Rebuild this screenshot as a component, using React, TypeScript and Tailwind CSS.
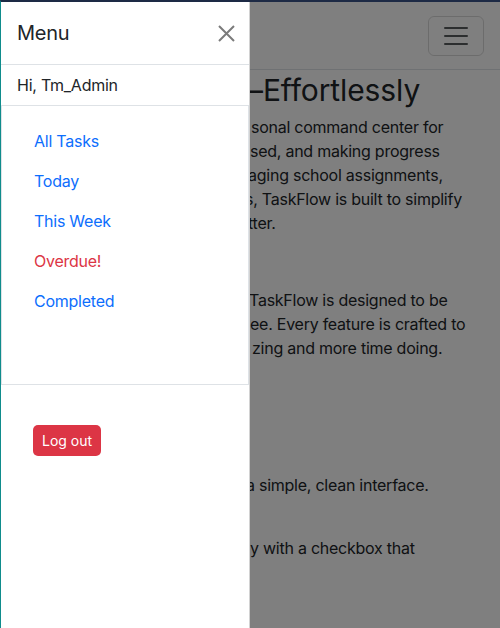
const links = [
  { label: "All Tasks", danger: false },
  { label: "Today", danger: false },
  { label: "This Week", danger: false },
  { label: "Overdue!", danger: true },
  { label: "Completed", danger: false },
];

function Navbar() {
  return (
    <nav className="flex h-[68px] items-center justify-end border-b border-[#dee2e6] bg-white pr-4">
      <button className="flex h-10 w-14 items-center justify-center rounded-md border border-[rgba(0,0,0,0.15)]">
        <svg width="30" height="30" viewBox="0 0 30 30">
          <path
            d="M4 7h22M4 15h22M4 23h22"
            stroke="rgba(33,37,41,0.75)"
            strokeWidth="2"
            strokeLinecap="round"
          />
        </svg>
      </button>
    </nav>
  );
}

function PageContent() {
  // only the right-hand part of the page shows past the open menu
  return (
    <main className="pl-[250px] text-[16px] leading-6 tracking-[-0.25px] text-[#212529]">
      <h1 className="-ml-[18px] mt-[3px] mb-2 whitespace-nowrap text-[30px] font-normal leading-[34px] tracking-[-0.1px]">
        —Effortlessly
      </h1>
      <p className="mb-[53px]">
        <span className="block whitespace-nowrap">sonal command center for</span>
        <span className="-ml-[1px] block whitespace-nowrap">sed, and making progress</span>
        <span className="-ml-[3px] block whitespace-nowrap">aging school assignments,</span>
        <span className="-ml-[6px] block whitespace-nowrap">s, TaskFlow is built to simplify</span>
        <span className="-ml-[3px] block whitespace-nowrap">tter.</span>
      </p>
      <p className="mb-[113px]">
        <span className="-ml-[2px] block whitespace-nowrap">TaskFlow is designed to be</span>
        <span className="-ml-[1px] block whitespace-nowrap">ee. Every feature is crafted to</span>
        <span className="ml-[1px] block whitespace-nowrap">zing and more time doing.</span>
      </p>
      <ul>
        <li className="-ml-[5px] mb-[39px] whitespace-nowrap">a simple, clean interface.</li>
        <li className="-ml-[1px] whitespace-nowrap">y with a checkbox that</li>
      </ul>
    </main>
  );
}

function SideMenu() {
  return (
    <aside className="absolute left-0 top-0 bottom-0 flex w-[249px] flex-col border-r border-[rgba(0,0,0,0.175)] bg-white tracking-[-0.25px] text-[#212529]">
      <div className="flex h-[63px] shrink-0 items-center justify-between border-b border-[#dee2e6] pl-4 pr-[14px]">
        <h5 className="text-[20px] font-normal leading-6">Menu</h5>
        <button aria-label="Close">
          <svg width="17" height="17" viewBox="0 0 17 17">
            <path d="M1 1l15 15M16 1L1 16" stroke="#7b7b7b" strokeWidth="2" />
          </svg>
        </button>
      </div>
      <div className="flex h-[41px] shrink-0 items-center border-b border-[#dee2e6] px-4">
        Hi, Tm_Admin
      </div>
      <div className="h-[279px] shrink-0 border-x border-b border-[#dee2e6] px-4 pt-[15px]">
        <ul className="flex flex-col">
          {links.map((l) => (
            <li key={l.label}>
              <a
                href="#"
                className={`block px-4 py-2 leading-6 ${l.danger ? "text-[#dc3545]" : "text-[#0d6efd]"}`}
              >
                {l.label}
              </a>
            </li>
          ))}
        </ul>
      </div>
      <div className="px-8 pt-10">
        <button className="rounded-[5px] bg-[#dc3545] px-[9px] py-[5px] text-[14px] leading-[21px] tracking-normal text-white">
          Log out
        </button>
      </div>
    </aside>
  );
}

export default function App() {
  return (
    <div
      className="h-[628px] overflow-hidden border-t-2 border-l border-t-[#1d2a45] border-l-[#0f8c8c] bg-white"
      style={{ fontFamily: "Inter, 'Noto Sans', sans-serif" }}
    >
      <div className="relative h-full">
        <Navbar />
        <PageContent />
        <div className="absolute inset-0 bg-black/50" />
        <SideMenu />
      </div>
    </div>
  );
}
